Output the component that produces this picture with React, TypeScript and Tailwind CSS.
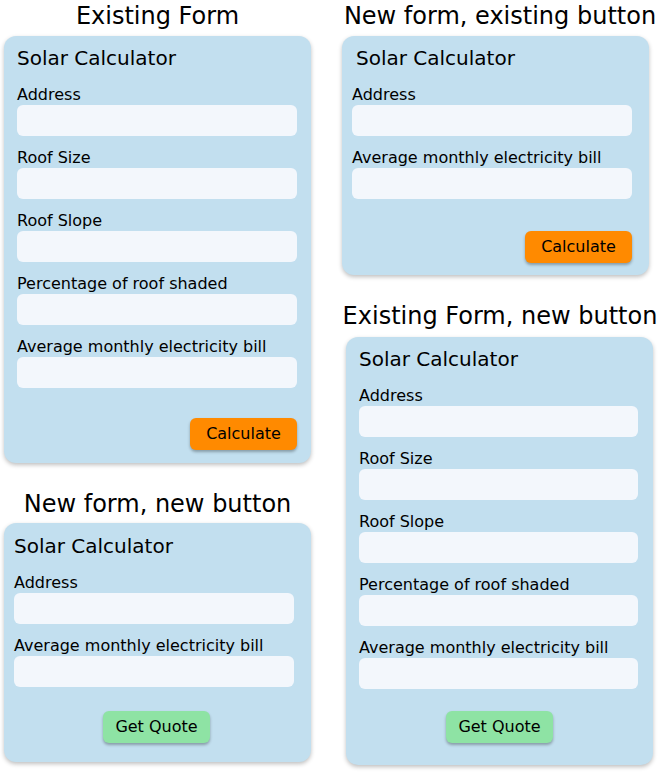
import React from "react";

const font = { fontFamily: "'DejaVu Sans', Inter, sans-serif" };

function Field({ label, first }: { label: string; first?: boolean }) {
  return (
    <div className={first ? "" : "mt-[13px]"}>
      <p className="text-[16px] leading-[17px] text-black">{label}</p>
      <div className="mt-[2px] h-[31px] w-full rounded-md bg-[#f3f7fc]" />
    </div>
  );
}

function Card({
  fields,
  button,
  className,
  titleClass = "",
  buttonClass = "",
}: {
  fields: string[];
  button: "calc" | "quote";
  className: string;
  titleClass?: string;
  buttonClass?: string;
}) {
  return (
    <div className={`rounded-xl bg-[#c2dfef] shadow-[0_2px_4px_rgba(0,0,0,0.25)] ${className}`}>
      <h2 className={`text-[20px] leading-[24px] text-black ${titleClass}`}>Solar Calculator</h2>
      <div className="mt-[16px]">
        {fields.map((f, i) => (
          <Field key={f} label={f} first={i === 0} />
        ))}
      </div>
      {button === "calc" ? (
        <div className="flex justify-end">
          <button className="h-[32px] w-[107px] rounded-md bg-[#ff8a00] text-[16px] text-black shadow-[0_2px_3px_rgba(0,0,0,0.3)]">
            Calculate
          </button>
        </div>
      ) : (
        <div className="flex justify-center">
          <button
            className={`h-[32px] w-[107px] rounded-md bg-[#8ee3a4] text-[16px] text-black shadow-[0_2px_3px_rgba(0,0,0,0.3)] ${buttonClass}`}
          >
            Get Quote
          </button>
        </div>
      )}
    </div>
  );
}

const full = ["Address", "Roof Size", "Roof Slope", "Percentage of roof shaded", "Average monthly electricity bill"];
const short = ["Address", "Average monthly electricity bill"];

export default function App() {
  return (
    <div className="flex h-[772px] w-[658px] bg-white" style={font}>
      <div className="ml-[4px] flex w-[307px] flex-col">
        <h1 className="mt-[1px] text-center text-[24px] leading-[30px] text-black">Existing Form</h1>
        <Card
          fields={full}
          button="calc"
          className="mt-[5px] flex flex-col pb-[13px] pl-[13px] pr-[14px] pt-[10px] [&>div:last-child]:mt-[30px]"
        />
        <h1 className="mt-[26px] text-center text-[24px] leading-[30px] text-black">New form, new button</h1>
        <Card
          fields={short}
          button="quote"
          buttonClass="ml-[5px]"
          className="mt-[4px] flex flex-col pb-[19px] pl-[10px] pr-[17px] pt-[11px] [&>div:last-child]:mt-[24px]"
        />
      </div>
      <div className="ml-[31px] flex w-[316px] flex-col">
        <h1 className="mt-[1px] text-center text-[24px] leading-[30px] text-black">New form, existing button</h1>
        <Card
          fields={short}
          button="calc"
          titleClass="ml-[4px]"
          className="mr-[9px] mt-[5px] flex flex-col pb-[12px] pl-[10px] pr-[17px] pt-[10px] [&>div:last-child]:mt-[32px]"
        />
        <h1 className="mt-[26px] text-center text-[24px] leading-[30px] text-black">Existing Form, new button</h1>
        <Card
          fields={full}
          button="quote"
          buttonClass="ml-[2px]"
          className="ml-[4px] mr-[5px] mt-[6px] flex flex-col pb-[22px] pl-[13px] pr-[15px] pt-[10px] [&>div:last-child]:mt-[22px]"
        />
      </div>
    </div>
  );
}
